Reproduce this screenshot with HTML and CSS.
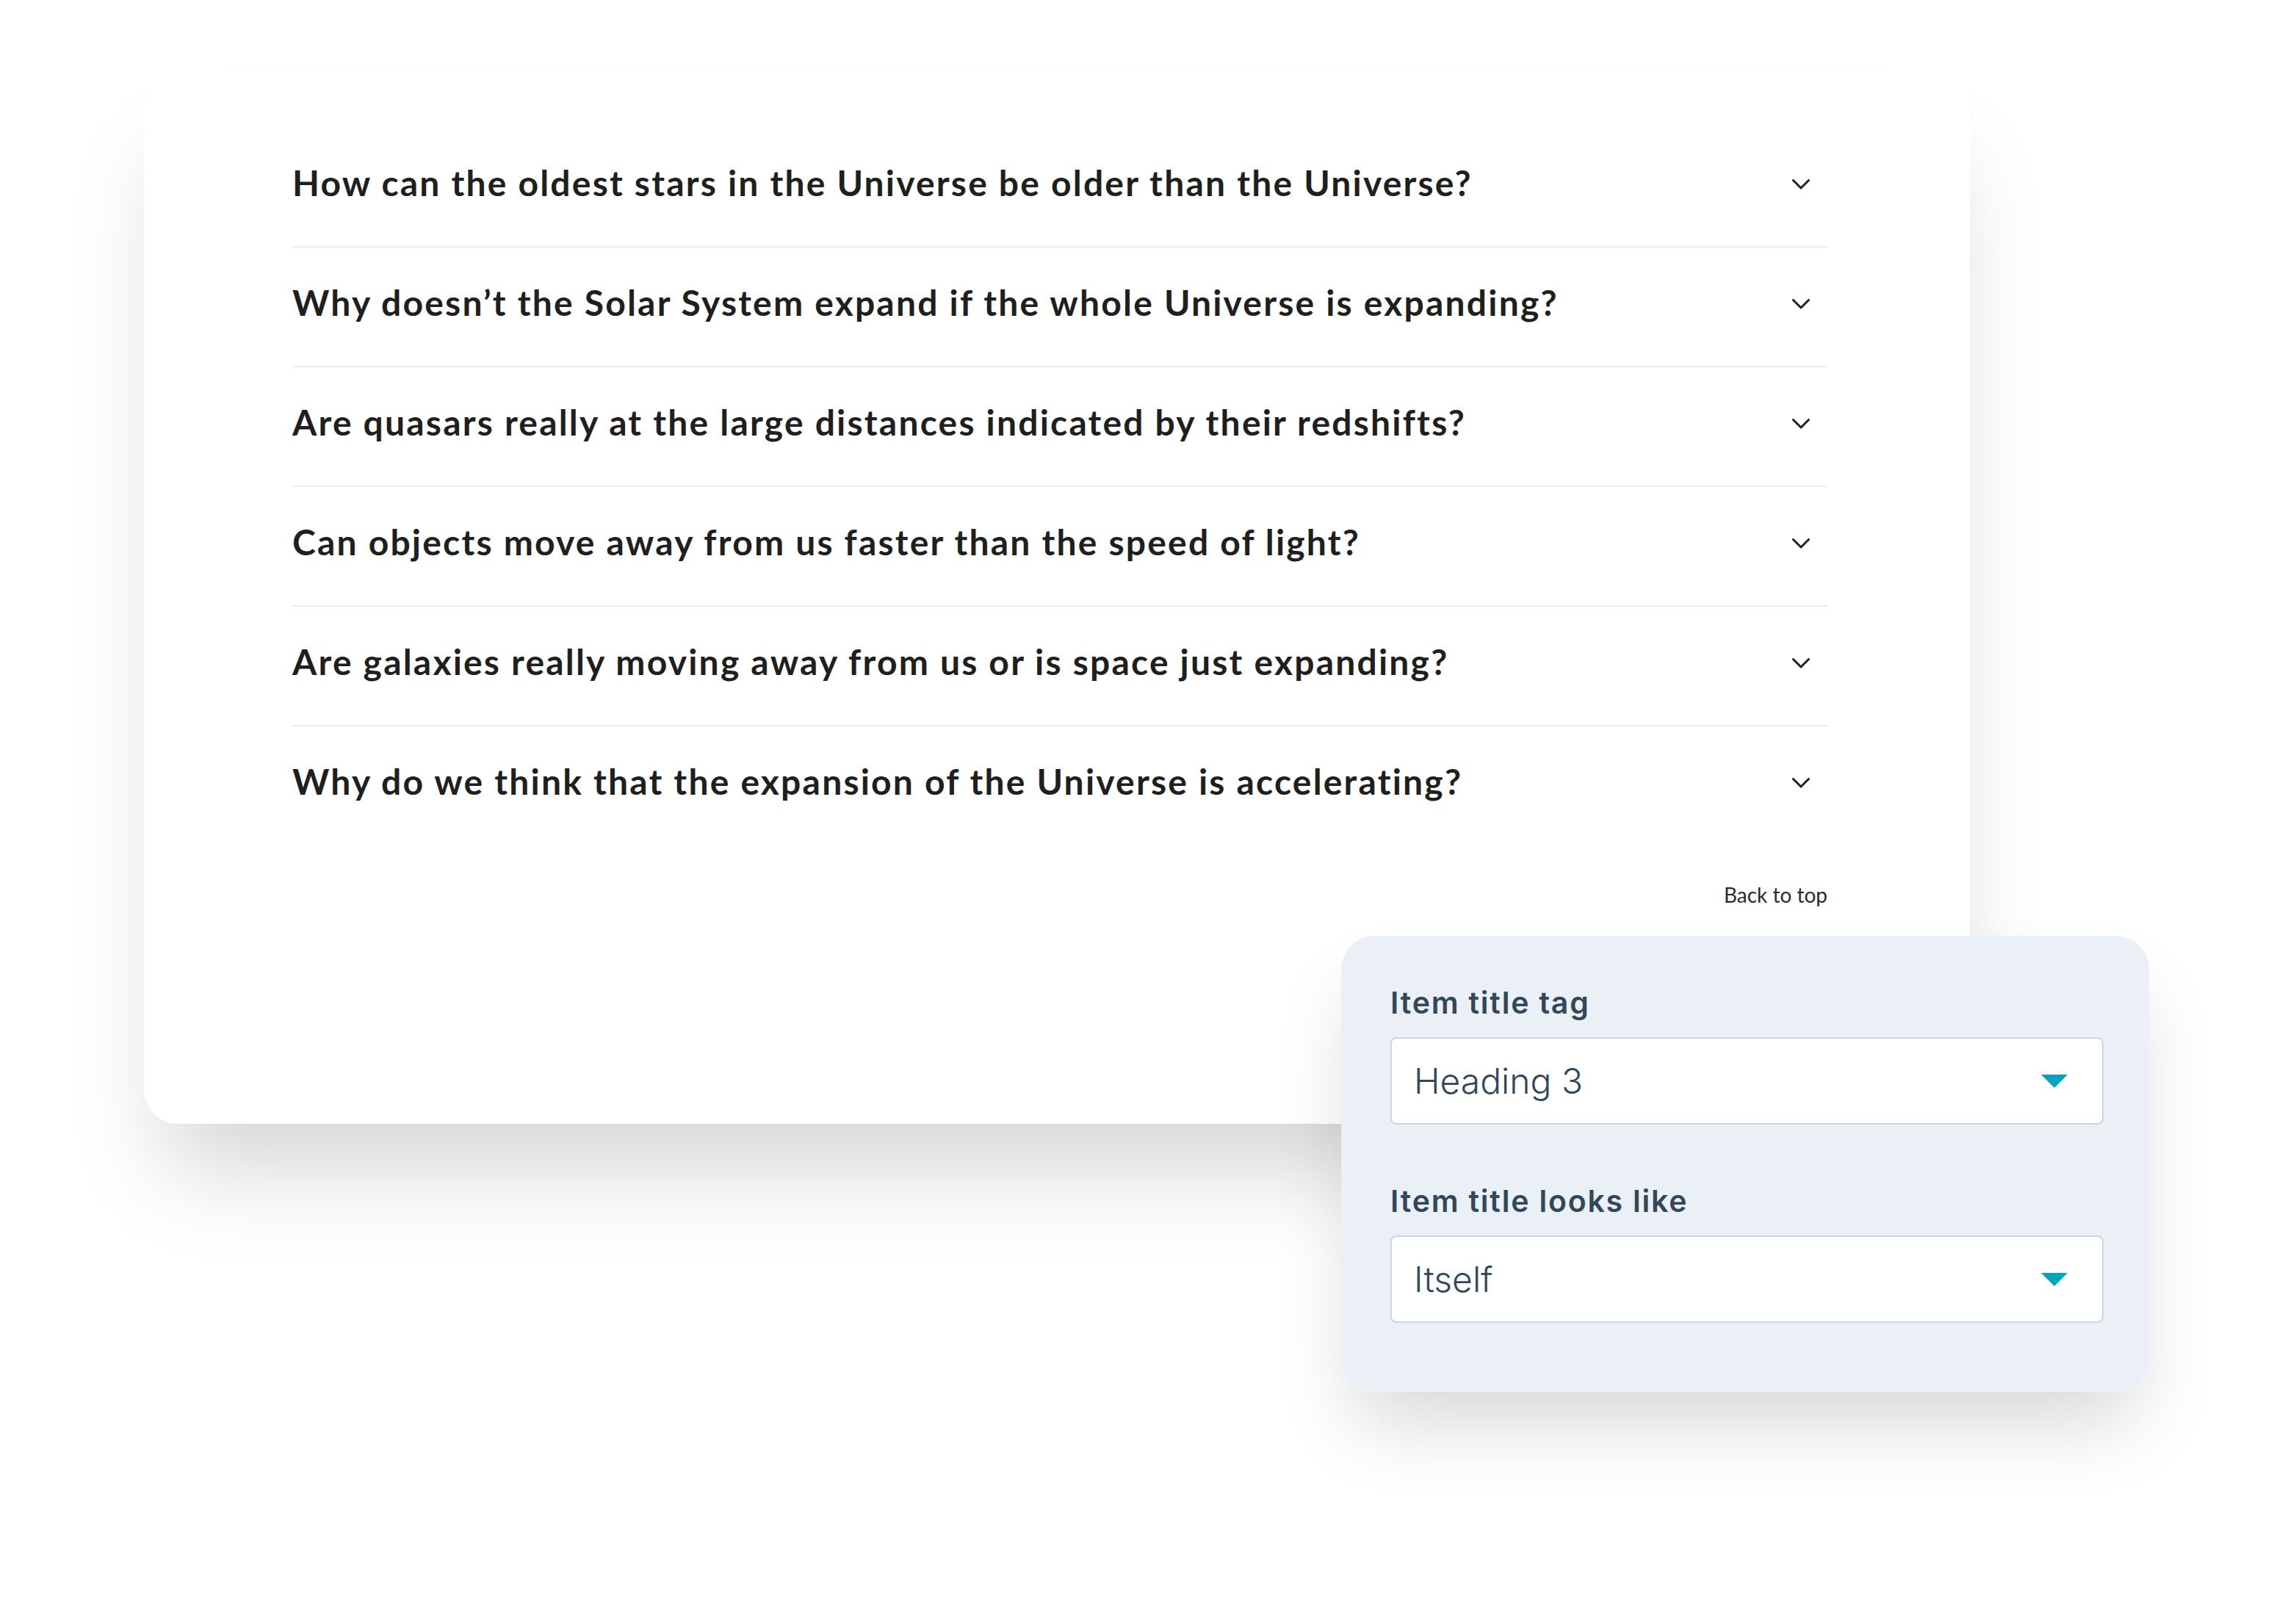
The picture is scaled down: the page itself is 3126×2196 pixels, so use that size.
FILE: index.html
```html
<!DOCTYPE html>
<html lang="en">
<head>
<meta charset="utf-8">
<title>FAQ accordion</title>
<link rel="stylesheet" href="styles.css">
</head>
<body>
<div class="stage">
  <section class="card">
    <ul class="faq">
      <li class="faq-item">
        <h3 class="q">How can the oldest stars in the Universe be older than the Universe?</h3>
        <svg class="chev" viewBox="0 0 24 14" width="24" height="14"><polyline points="1.5,1.5 12,12 22.5,1.5"/></svg>
      </li>
      <li class="faq-item">
        <h3 class="q">Why doesn’t the Solar System expand if the whole Universe is expanding?</h3>
        <svg class="chev" viewBox="0 0 24 14" width="24" height="14"><polyline points="1.5,1.5 12,12 22.5,1.5"/></svg>
      </li>
      <li class="faq-item">
        <h3 class="q">Are quasars really at the large distances indicated by their redshifts?</h3>
        <svg class="chev" viewBox="0 0 24 14" width="24" height="14"><polyline points="1.5,1.5 12,12 22.5,1.5"/></svg>
      </li>
      <li class="faq-item">
        <h3 class="q">Can objects move away from us faster than the speed of light?</h3>
        <svg class="chev" viewBox="0 0 24 14" width="24" height="14"><polyline points="1.5,1.5 12,12 22.5,1.5"/></svg>
      </li>
      <li class="faq-item">
        <h3 class="q">Are galaxies really moving away from us or is space just expanding?</h3>
        <svg class="chev" viewBox="0 0 24 14" width="24" height="14"><polyline points="1.5,1.5 12,12 22.5,1.5"/></svg>
      </li>
      <li class="faq-item">
        <h3 class="q">Why do we think that the expansion of the Universe is accelerating?</h3>
        <svg class="chev" viewBox="0 0 24 14" width="24" height="14"><polyline points="1.5,1.5 12,12 22.5,1.5"/></svg>
      </li>
    </ul>
    <div class="back"><a class="back-link">Back to top</a></div>
  </section>

  <aside class="panel">
    <div class="field">
      <label class="field-label">Item title tag</label>
      <div class="select">
        <span class="select-value">Heading 3</span>
        <svg class="caret" viewBox="0 0 36 18" width="36" height="18"><polygon points="0,0 36,0 18,18"/></svg>
      </div>
    </div>
    <div class="field">
      <label class="field-label">Item title looks like</label>
      <div class="select">
        <span class="select-value">Itself</span>
        <svg class="caret" viewBox="0 0 36 18" width="36" height="18"><polygon points="0,0 36,0 18,18"/></svg>
      </div>
    </div>
  </aside>
</div>
</body>
</html>
```
FILE: styles.css
```css
html, body {
  margin: 0;
  padding: 0;
  background: #ffffff;
}

body {
  width: 3126px;
  height: 2196px;
  overflow: hidden;
}

.stage {
  position: relative;
  width: 3126px;
  height: 2196px;
  padding-top: 100px;
  box-sizing: border-box;
}

.card {
  margin-left: 196px;
  width: 2486px;
  height: 1430px;
  box-sizing: border-box;
  padding: 74px 194px 0 202px;
  background: #ffffff;
  border-radius: 46px;
  box-shadow: 0 90px 130px -30px rgba(0, 0, 0, 0.17);
}

.faq {
  list-style: none;
  margin: 0;
  padding: 0;
}

.faq-item {
  display: flex;
  align-items: center;
  justify-content: space-between;
  padding: 45px 0 56px;
  border-bottom: 2px solid #ebebf2;
}

.faq-item:last-child {
  border-bottom: 2px solid transparent;
}

.q {
  margin: 0;
  font-family: "Lato", "Liberation Sans", sans-serif;
  font-weight: 700;
  font-size: 48px;
  line-height: 60px;
  letter-spacing: 2.2px;
  color: #1f1f1f;
}

.chev {
  flex: none;
  margin-right: 24px;
  margin-top: 4px;
  fill: none;
  stroke: #222222;
  stroke-width: 3;
  stroke-linecap: round;
  stroke-linejoin: round;
}

.back {
  display: flex;
  justify-content: flex-end;
  margin-top: 48px;
}

.back-link {
  font-family: "Lato", "Liberation Sans", sans-serif;
  font-weight: 400;
  font-size: 28px;
  line-height: 36px;
  color: #2b2b2b;
}

.panel {
  position: absolute;
  left: 1826px;
  top: 1274px;
  width: 1100px;
  height: 621px;
  box-sizing: border-box;
  padding: 66px 62px 0 67px;
  background: #eaf0f6;
  border-radius: 46px;
  box-shadow: 0 60px 110px -20px rgba(0, 0, 0, 0.16);
}

.field + .field {
  margin-top: 79px;
}

.field-label {
  display: block;
  margin-bottom: 22px;
  font-family: "Inter", "Noto Sans", sans-serif;
  font-weight: 600;
  font-size: 41px;
  line-height: 50px;
  letter-spacing: 1.8px;
  color: #33475b;
}

.select {
  display: flex;
  align-items: center;
  justify-content: space-between;
  height: 119px;
  box-sizing: border-box;
  padding: 0 47px 0 30px;
  background: #ffffff;
  border: 2px solid #cbd6e2;
  border-radius: 8px;
}

.select-value {
  font-family: "Inter", "Noto Sans", sans-serif;
  font-weight: 300;
  font-size: 48px;
  line-height: 60px;
  color: #33475b;
}

.caret {
  flex: none;
  fill: #00a4bd;
}
```
